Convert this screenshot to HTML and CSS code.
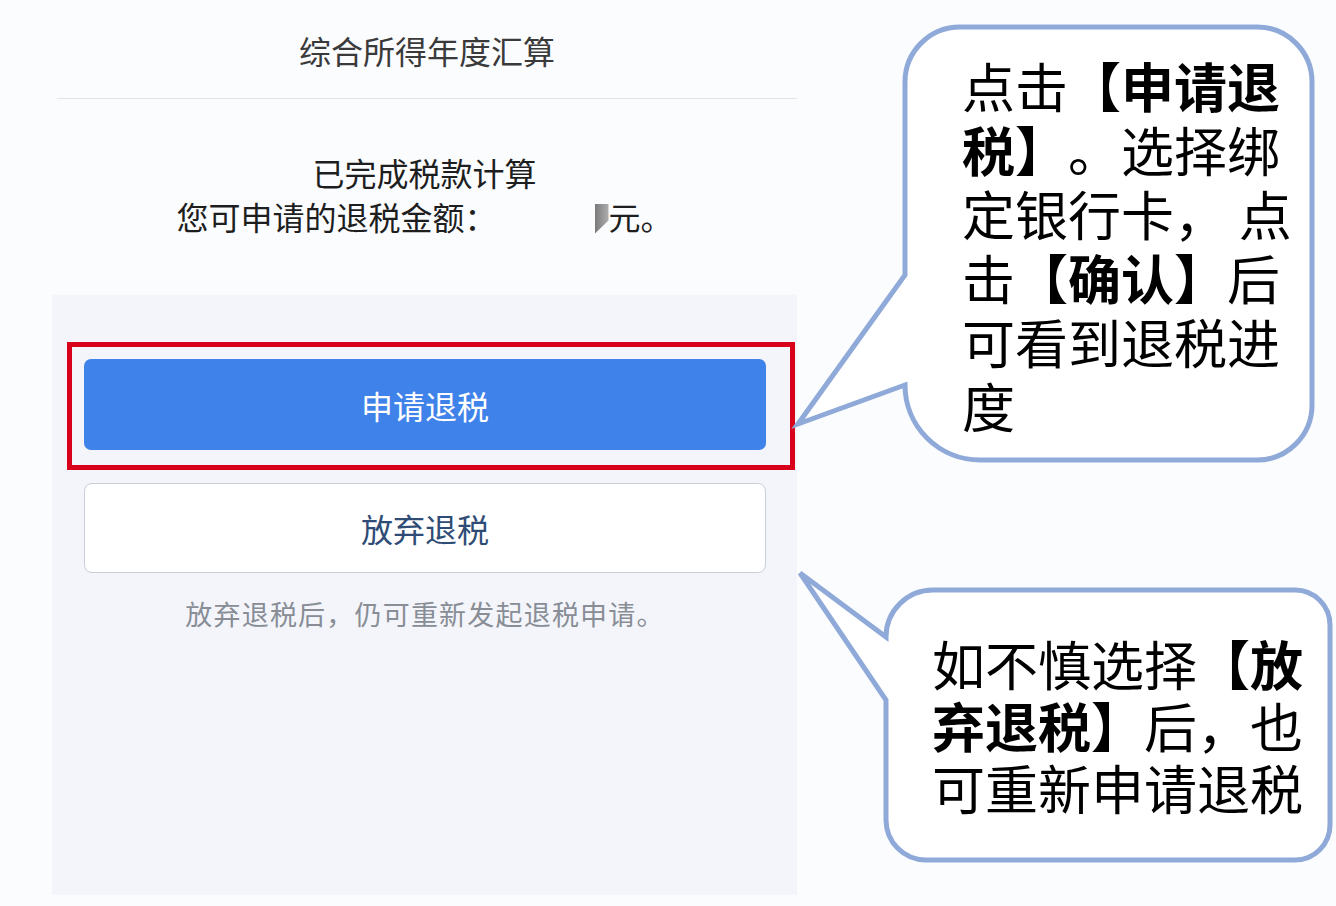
FILE: index.html
```html
<!DOCTYPE html>
<html lang="zh-CN">
<head>
    <meta charset="UTF-8">
    <meta name="viewport" content="width=device-width, initial-scale=1.0">
    <title>申请退税</title>
    <link rel="stylesheet" href="styles.css">
</head>
<body>
    <div class="phone">
        <div class="phone-top">
            <div class="nav-title">综合所得年度汇算</div>
            <div class="summary">
                <p class="done">已完成税款计算</p>
                <p class="amount">您可申请的退税金额：<span class="amount-hidden"><span class="smudge"></span></span>元。</p>
            </div>
        </div>
        <div class="phone-actions">
            <div class="highlight">
                <button class="btn btn-primary">申请退税</button>
            </div>
            <button class="btn btn-outline">放弃退税</button>
            <p class="hint">放弃退税后，仍可重新发起退税申请。</p>
        </div>
    </div>

    <!-- callout: apply -->
    <div class="callout callout-apply">
        <svg class="bubble" viewBox="790 20 530 450" width="530" height="450">
            <path d="M960 27 H1257 A55 55 0 0 1 1312 82 V405 A55 55 0 0 1 1257 460 H980 A75 75 0 0 1 905 385 L798 424 L905 275 V82 A55 55 0 0 1 960 27 Z"/>
        </svg>
        <div class="callout-text">
            点击<b>【申请退</b><br>
            <b>税】</b>。选择绑<br>
            定银行卡， 点<br>
            击<b>【确认】</b>后<br>
            可看到退税进<br>
            度
        </div>
    </div>

    <!-- callout: give up -->
    <div class="callout callout-giveup">
        <svg class="bubble" viewBox="790 560 546 310" width="546" height="310">
            <path d="M933 590 H1295 A35 35 0 0 1 1330 625 V825 A35 35 0 0 1 1295 860 H926 A40 40 0 0 1 886 820 V700 L800 573 L886 637 A47 47 0 0 1 933 590 Z"/>
        </svg>
        <div class="callout-text">
            如不慎选择<b>【放</b><br>
            <b>弃退税】</b>后，也<br>
            可重新申请退税
        </div>
    </div>
</body>
</html>
```

FILE: styles.css
```css
body {
    font-family: "Noto Sans CJK SC", "Noto Sans", sans-serif;
    margin: 0;
    width: 1336px;
    height: 906px;
    position: relative;
    overflow: hidden;
    background-color: #fbfcfe;
}
.phone {
    margin-left: 52px;
    width: 745px;
    height: 895px;
    display: flex;
    flex-direction: column;
}
.phone-top {
    height: 295px;
    background-color: #fbfcfe;
}
.nav-title {
    height: 98px;
    line-height: 100px;
    text-align: center;
    font-size: 32px;
    color: #3a3a3a;
    border-bottom: 1px solid #e2e6ec;
    margin-left: 5px;
}
.summary {
    padding-top: 51px;
    text-align: center;
}
.summary p {
    margin: 0;
    font-size: 32px;
    line-height: 44px;
    color: #1e1e1e;
}
.amount-hidden {
    display: inline-block;
    width: 112px;
    height: 28px;
    position: relative;
    vertical-align: -4px;
}
.smudge {
    position: absolute;
    right: 0;
    top: -2px;
    width: 14px;
    height: 30px;
    background: linear-gradient(90deg, #7a7a7a, #b0b0b0);
    clip-path: polygon(0 0, 100% 0, 100% 55%, 0 100%);
}
.phone-actions {
    flex: 1;
    background-color: #f3f5fa;
    padding: 47px 31px 0 32px;
}
.highlight {
    margin: 0 -29px 0 -17px;
    padding: 12px 24px 15px 12px;
    border: 5px solid #d9001b;
}
.btn {
    display: block;
    width: 100%;
    font-family: inherit;
    font-size: 32px;
    cursor: pointer;
}
.btn-primary {
    height: 91px;
    background-color: #3f83ea;
    color: #ffffff;
    border: none;
    border-radius: 7px;
}
.btn-outline {
    margin-top: 13px;
    height: 90px;
    background-color: #ffffff;
    color: #2f4c76;
    border: 1px solid #c9ced8;
    border-radius: 8px;
}
.hint {
    margin: 23px 0 0;
    text-align: center;
    font-size: 27px;
    letter-spacing: 1.2px;
    line-height: 36px;
    color: #888d96;
}

/* callouts */
.callout {
    position: absolute;
}
.callout-apply {
    left: 790px;
    top: 20px;
    width: 530px;
    height: 450px;
}
.callout-giveup {
    left: 790px;
    top: 560px;
    width: 546px;
    height: 310px;
}
.bubble {
    position: absolute;
    left: 0;
    top: 0;
}
.bubble path {
    fill: #ffffff;
    stroke: #8fa9d8;
    stroke-width: 5;
}
.callout-text {
    position: relative;
    font-size: 53px;
    color: #000000;
    white-space: nowrap;
    text-spacing-trim: space-all;
}
.callout-apply .callout-text {
    padding: 33px 0 0 172px;
    line-height: 64px;
}
.callout-giveup .callout-text {
    padding: 72px 0 0 142px;
    line-height: 62px;
}
.callout-text b {
    font-weight: 700;
}
```
